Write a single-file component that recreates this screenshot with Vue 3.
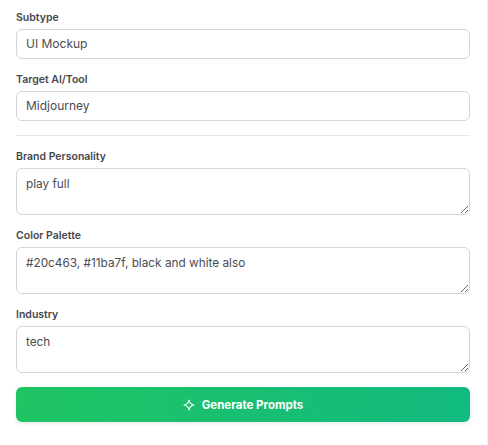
<template>
  <div class="panel">
    <form class="prompt-form" @submit.prevent>
      <div class="field">
        <label class="field-label">Subtype</label>
        <input class="text-input" type="text" value="UI Mockup" />
      </div>
      <div class="field">
        <label class="field-label">Target AI/Tool</label>
        <input class="text-input" type="text" value="Midjourney" />
      </div>

      <hr class="divider" />

      <div v-for="field in textFields" :key="field.label" class="field">
        <label class="field-label">{{ field.label }}</label>
        <textarea class="text-area" :value="field.value"></textarea>
      </div>

      <button class="generate-button" type="submit">
        <svg width="12" height="12" viewBox="0 0 24 24" fill="none" xmlns="http://www.w3.org/2000/svg">
          <path d="M12 2C13 8 16 11 22 12C16 13 13 16 12 22C11 16 8 13 2 12C8 11 11 8 12 2Z" stroke="#fff" stroke-width="2.4" stroke-linejoin="round"/>
        </svg>
        <span>Generate Prompts</span>
      </button>
    </form>
  </div>
</template>

<script setup>
const textFields = [
  { label: 'Brand Personality', value: 'play full' },
  { label: 'Color Palette', value: '#20c463, #11ba7f, black and white also' },
  { label: 'Industry', value: 'tech' }
];
</script>

<style scoped>
.panel {
  width: 488px;
  height: 445px;
  box-sizing: border-box;
  padding: 12px 17px 0 16px;
  background-color: #fff;
  border-right: 1px solid #eceef0;
  font-family: Inter, "Liberation Sans", sans-serif;
}

.prompt-form {
  display: flex;
  flex-direction: column;
}

.field {
  display: flex;
  flex-direction: column;
  gap: 5px;
  margin-bottom: 15px;
}

.field-label {
  font-size: 10.5px;
  line-height: 12px;
  font-weight: 600;
  color: #46464c;
}

.text-input,
.text-area {
  box-sizing: border-box;
  width: 100%;
  margin: 0;
  padding: 0 9px;
  border: 1px solid #d6d6d8;
  border-radius: 6px;
  background-color: #fff;
  color: #4b4b50;
  font-family: inherit;
  font-size: 12px;
  outline: none;
}

.text-input {
  height: 30px;
  padding-bottom: 1px;
}

.text-area {
  height: 47px;
  padding-top: 7px;
  font-size: 11.8px;
  line-height: 16px;
}

.divider {
  width: 100%;
  height: 1px;
  margin: -1px 0 15px;
  border: none;
  background-color: #e6e7e9;
}

.generate-button {
  display: flex;
  align-items: center;
  justify-content: center;
  gap: 7px;
  width: 100%;
  height: 35px;
  margin-top: -1px;
  padding: 0;
  border: none;
  border-radius: 6px;
  background: linear-gradient(100deg, #20c463, #11ba7f);
  box-shadow: 0 2px 4px rgba(0, 0, 0, 0.08);
  color: #fff;
  font-family: inherit;
  font-size: 11.5px;
  font-weight: 700;
  cursor: pointer;
}
</style>

<style>
body {
  background-color: #fff;
}
</style>
